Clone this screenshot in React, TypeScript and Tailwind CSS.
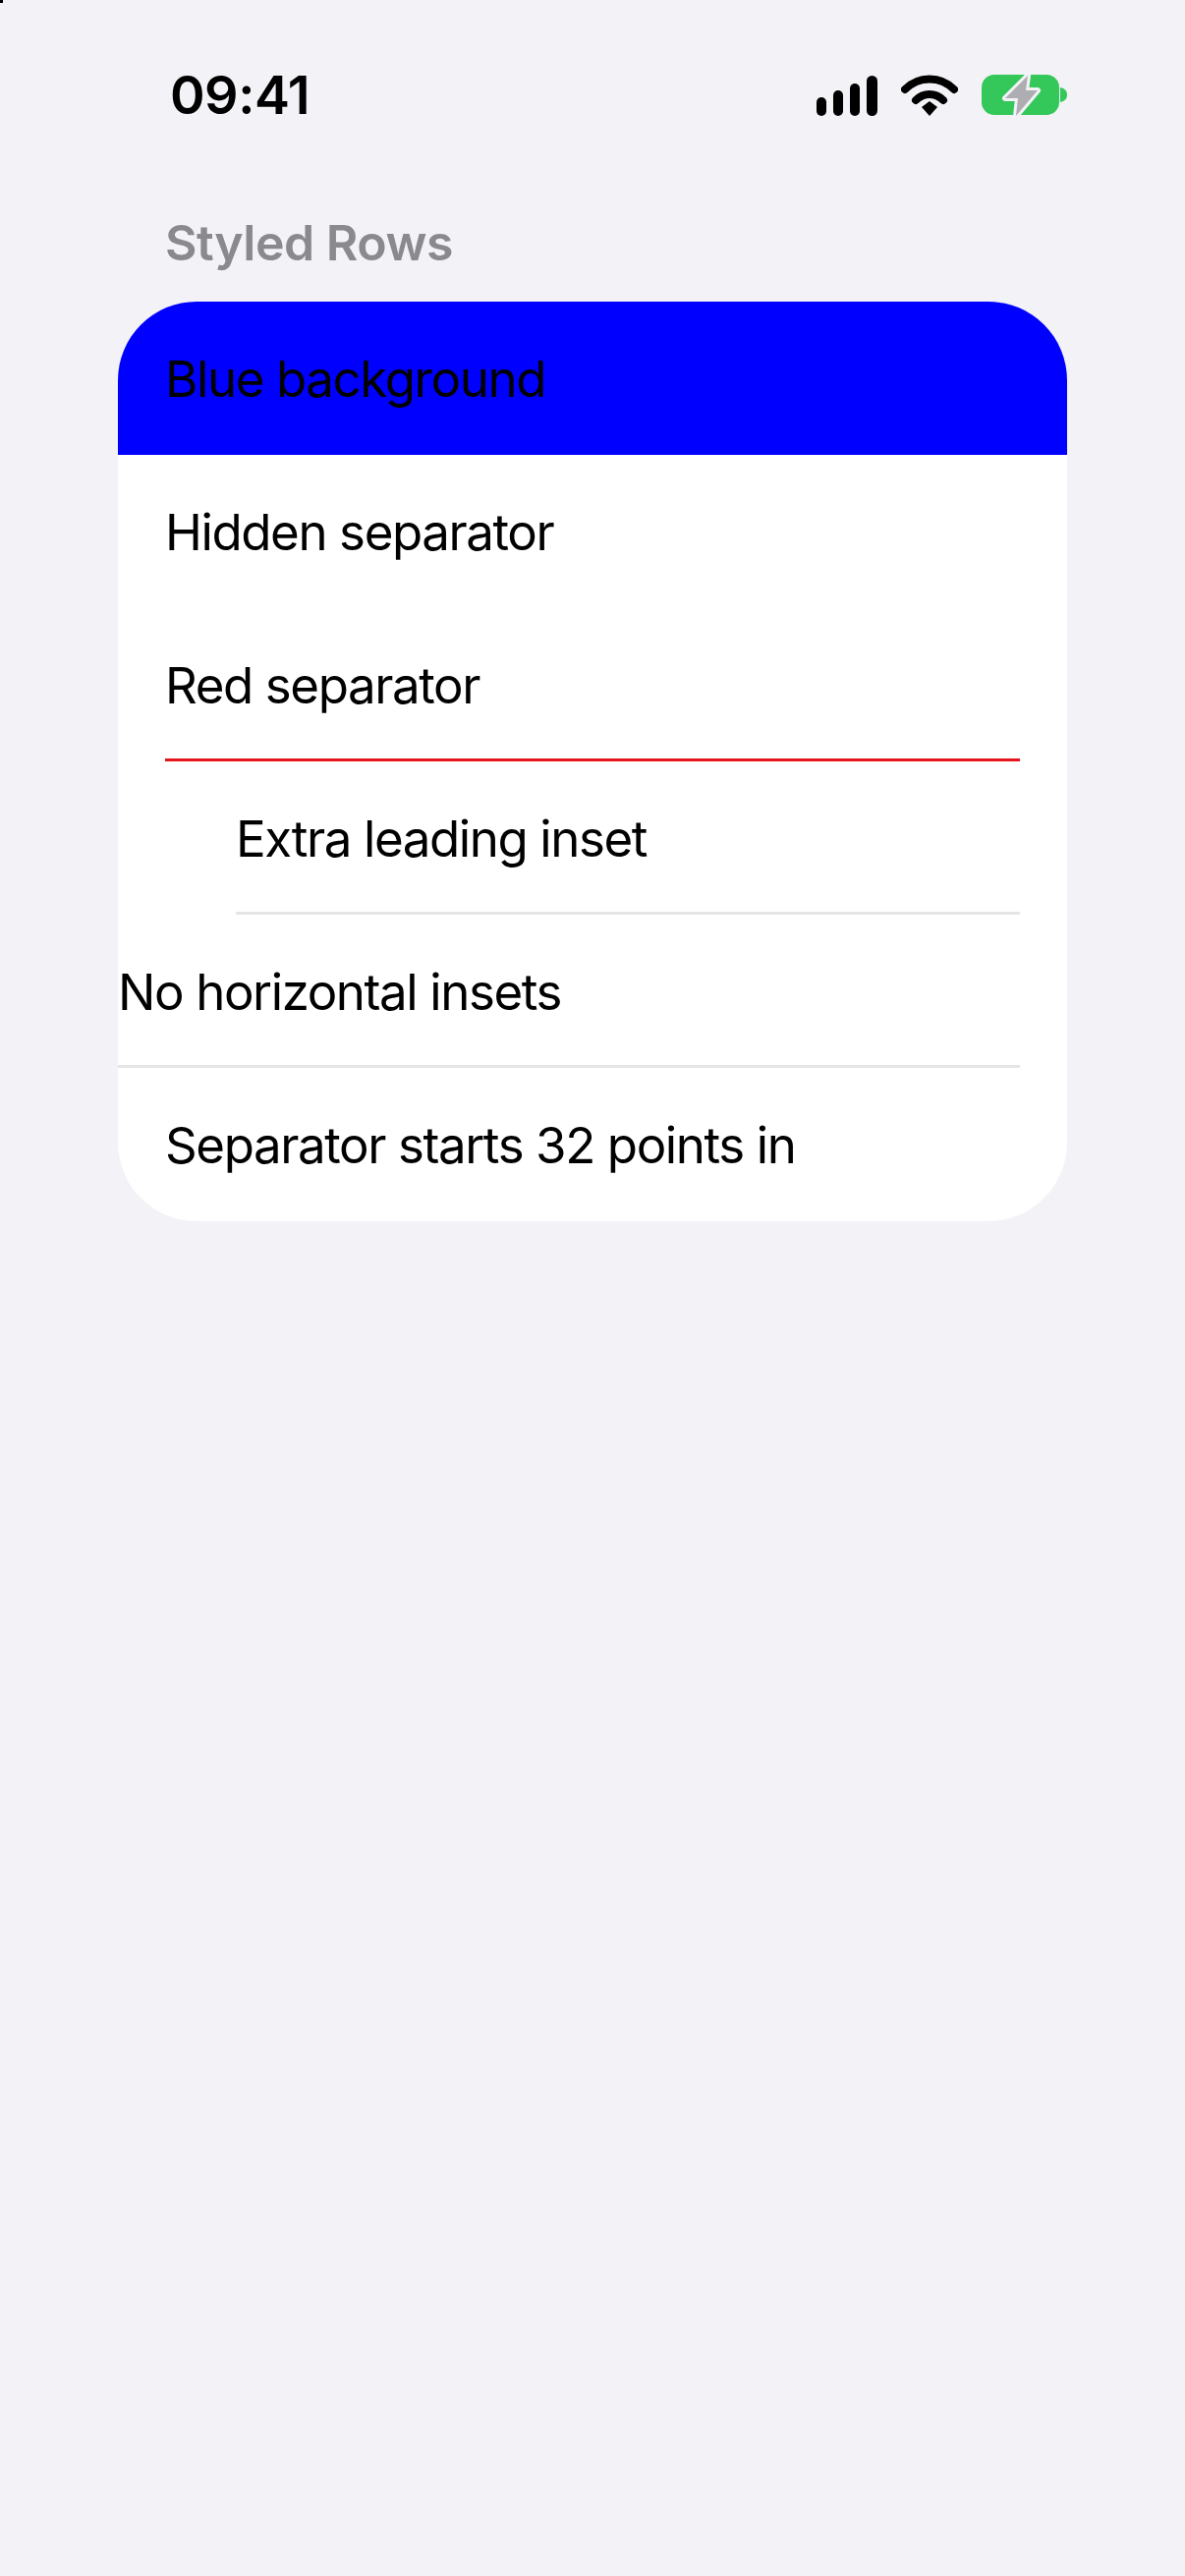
import React from "react";

type RowProps = {
  label: string;
  textClass?: string;
  rowClass?: string;
  separatorClass?: string;
};

const Row: React.FC<RowProps> = ({ label, textClass = "pl-[48px]", rowClass = "", separatorClass }) => (
  <div className={`flex h-[156px] flex-col ${rowClass}`}>
    <div className={`flex flex-1 items-center pt-[3px] text-[51px] leading-none tracking-[-1.4px] text-black ${textClass}`}>
      {label}
    </div>
    <div className={`h-[3px] ${separatorClass ?? ""}`} />
  </div>
);

const StatusIcons = () => (
  <div className="flex items-center gap-[24px]">
    <svg width="62" height="41" viewBox="0 0 62 41" fill="#000">
      <rect x="0" y="22" width="10" height="19" rx="5" />
      <rect x="17" y="15" width="10" height="26" rx="5" />
      <rect x="34" y="8" width="10" height="33" rx="5" />
      <rect x="51" y="0" width="11" height="41" rx="5.5" />
    </svg>
    <svg width="58" height="42" viewBox="0 0 58 42" fill="none" stroke="#000" strokeLinecap="round">
      <path d="M4 15 C18 1 40 1 54 15" strokeWidth="8" />
      <path d="M15 26 C23 18 35 18 43 26" strokeWidth="8" />
      <path d="M21 33 L29 27 L37 33 L29 42 Z" fill="#000" stroke="none" />
    </svg>
    <svg width="87" height="46" viewBox="0 0 87 46" fill="none">
      <rect x="0" y="2" width="79" height="41" rx="13" fill="#34C759" />
      <path d="M80 15 C85 16 87 19 87 22.500 C87 26 85 29 80 30 Z" fill="#34C759" />
      <path
        d="M47 3 L24 26 L37 26 L35 44 L57 18 L45 18 Z"
        fill="#AEAEB2"
        stroke="#F2F2F7"
        strokeWidth="6"
        strokeLinejoin="round"
        paintOrder="stroke"
      />
    </svg>
  </div>
);

export default function App() {
  return (
    <div
      className="relative flex min-h-[2622px] w-[1206px] flex-col bg-[#F2F2F7]"
      style={{ fontFamily: "Inter, 'Liberation Sans', sans-serif" }}
    >
      <div className="absolute left-0 top-0 h-[3px] w-[3px] bg-black" />

      <div className="flex h-[194px] items-center justify-between pl-[173px] pr-[120px]">
        <span className="text-[54px] font-semibold leading-none tracking-[-0.5px] text-black">09:41</span>
        <StatusIcons />
      </div>

      <div className="mt-[24px] pl-[168px] text-[50px] font-semibold leading-[58px] tracking-[-0.5px] text-[#8A8A8E]">
        Styled Rows
      </div>

      <div className="mx-[120px] mt-[31px] overflow-hidden rounded-[80px] bg-white">
        <Row label="Blue background" rowClass="bg-[#0000FF]" />
        <Row label="Hidden separator" />
        <Row label="Red separator" separatorClass="mx-[48px] bg-[#E5141B]" />
        <Row label="Extra leading inset" textClass="pl-[120px]" separatorClass="ml-[120px] mr-[48px] bg-[#E5E5E6]" />
        <Row label="No horizontal insets" textClass="pl-0" separatorClass="mr-[48px] bg-[#E5E5E6]" />
        <Row label="Separator starts 32 points in" />
      </div>
    </div>
  );
}
